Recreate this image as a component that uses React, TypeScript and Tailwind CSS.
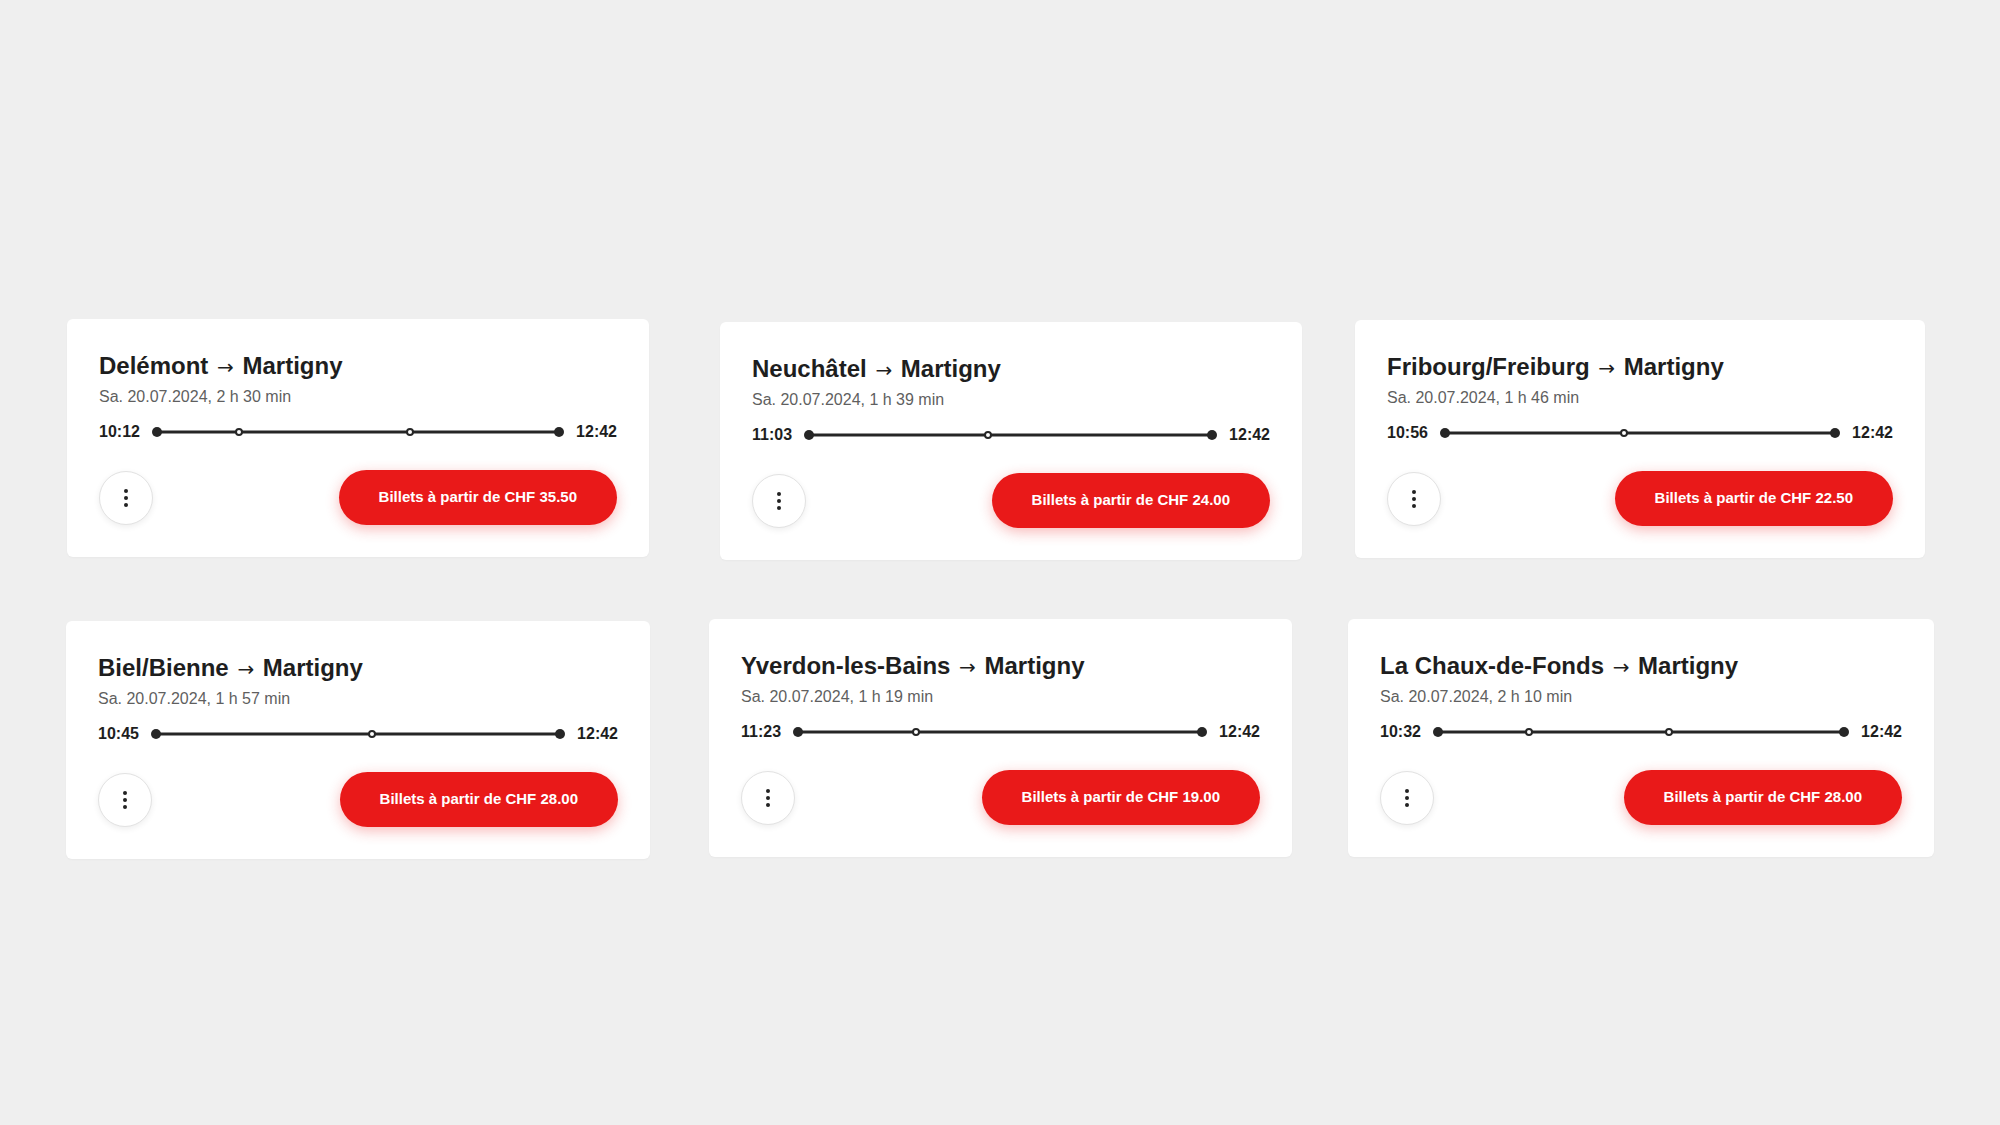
import React from 'react';

interface Connection {
  from: string;
  date: string;
  dep: string;
  arr: string;
  stops: number[];
  price: string;
  className: string;
}

const rowOne: Connection[] = [
  { from: 'Delémont', date: 'Sa. 20.07.2024, 2 h 30 min', dep: '10:12', arr: '12:42', stops: [0.203, 0.629], price: '35.50', className: 'ml-[67px] w-[582px]' },
  { from: 'Neuchâtel', date: 'Sa. 20.07.2024, 1 h 39 min', dep: '11:03', arr: '12:42', stops: [0.443], price: '24.00', className: 'ml-[71px] mt-[3px] w-[582px]' },
  { from: 'Fribourg/Freiburg', date: 'Sa. 20.07.2024, 1 h 46 min', dep: '10:56', arr: '12:42', stops: [0.46], price: '22.50', className: 'ml-[53px] mt-[1px] w-[570px]' },
];

const rowTwo: Connection[] = [
  { from: 'Biel/Bienne', date: 'Sa. 20.07.2024, 1 h 57 min', dep: '10:45', arr: '12:42', stops: [0.534], price: '28.00', className: 'ml-[66px] mt-[2px] w-[584px]' },
  { from: 'Yverdon-les-Bains', date: 'Sa. 20.07.2024, 1 h 19 min', dep: '11:23', arr: '12:42', stops: [0.292], price: '19.00', className: 'ml-[59px] w-[583px]' },
  { from: 'La Chaux-de-Fonds', date: 'Sa. 20.07.2024, 2 h 10 min', dep: '10:32', arr: '12:42', stops: [0.225, 0.57], price: '28.00', className: 'ml-[56px] w-[586px]' },
];

function Timeline({ dep, arr, stops }: { dep: string; arr: string; stops: number[] }) {
  return (
    <div className="mt-[15px] flex h-[20px] items-center gap-[12px] text-[16px] font-bold leading-[20px] text-[#1e1e1e]">
      <span>{dep}</span>
      <div className="relative h-[10px] flex-1">
        <div className="absolute left-[5px] right-[5px] top-1/2 h-[3px] -translate-y-1/2 bg-[#262626]" />
        <div className="absolute left-0 top-0 h-[10px] w-[10px] rounded-full bg-[#262626]" />
        <div className="absolute right-0 top-0 h-[10px] w-[10px] rounded-full bg-[#262626]" />
        {stops.map((f) => (
          <div
            key={f}
            className="absolute top-1/2 h-[8px] w-[8px] -translate-x-1/2 -translate-y-1/2 rounded-full border-2 border-[#262626] bg-white"
            style={{ left: `calc(5px + (100% - 10px) * ${f})` }}
          />
        ))}
      </div>
      <span>{arr}</span>
    </div>
  );
}

function ConnectionCard({ c }: { c: Connection }) {
  return (
    <div className={`${c.className} shrink-0 rounded-md bg-white px-8 pb-8 pt-[33px] shadow-[0_1px_2px_rgba(0,0,0,0.03)]`}>
      <h2 className="h-[28px] text-[24px] font-bold leading-[28px] text-[#1e1e1e]">
        {c.from} <span className="mx-[2px] font-['DejaVu_Sans',sans-serif] text-[20px] font-normal leading-none">→</span> Martigny
      </h2>
      <p className="mt-[7px] text-[16px] leading-[20px] text-[#5f5f5f]">{c.date}</p>
      <Timeline dep={c.dep} arr={c.arr} stops={c.stops} />
      <div className="mt-[28px] flex items-center justify-between">
        <button className="flex h-[54px] w-[54px] items-center justify-center rounded-full border border-[#e2e2e2] bg-white shadow-[0_2px_6px_rgba(0,0,0,0.07)]">
          <svg width="4" height="18" viewBox="0 0 4 18" fill="#222">
            <circle cx="2" cy="2" r="2" />
            <circle cx="2" cy="9" r="2" />
            <circle cx="2" cy="16" r="2" />
          </svg>
        </button>
        <button className="flex h-[55px] items-center rounded-full bg-[#e91919] px-10 text-[15px] font-bold text-white shadow-[0_4px_14px_rgba(233,25,25,0.3)]">
          Billets à partir de CHF {c.price}
        </button>
      </div>
    </div>
  );
}

export default function App() {
  return (
    <div className="flex min-h-[1125px] w-full flex-col gap-[59px] bg-[#efefef] pt-[319px] font-['Liberation_Sans',Arial,sans-serif]">
      <div className="flex items-start">
        {rowOne.map((c) => (
          <ConnectionCard key={c.from} c={c} />
        ))}
      </div>
      <div className="flex items-start">
        {rowTwo.map((c) => (
          <ConnectionCard key={c.from} c={c} />
        ))}
      </div>
    </div>
  );
}
